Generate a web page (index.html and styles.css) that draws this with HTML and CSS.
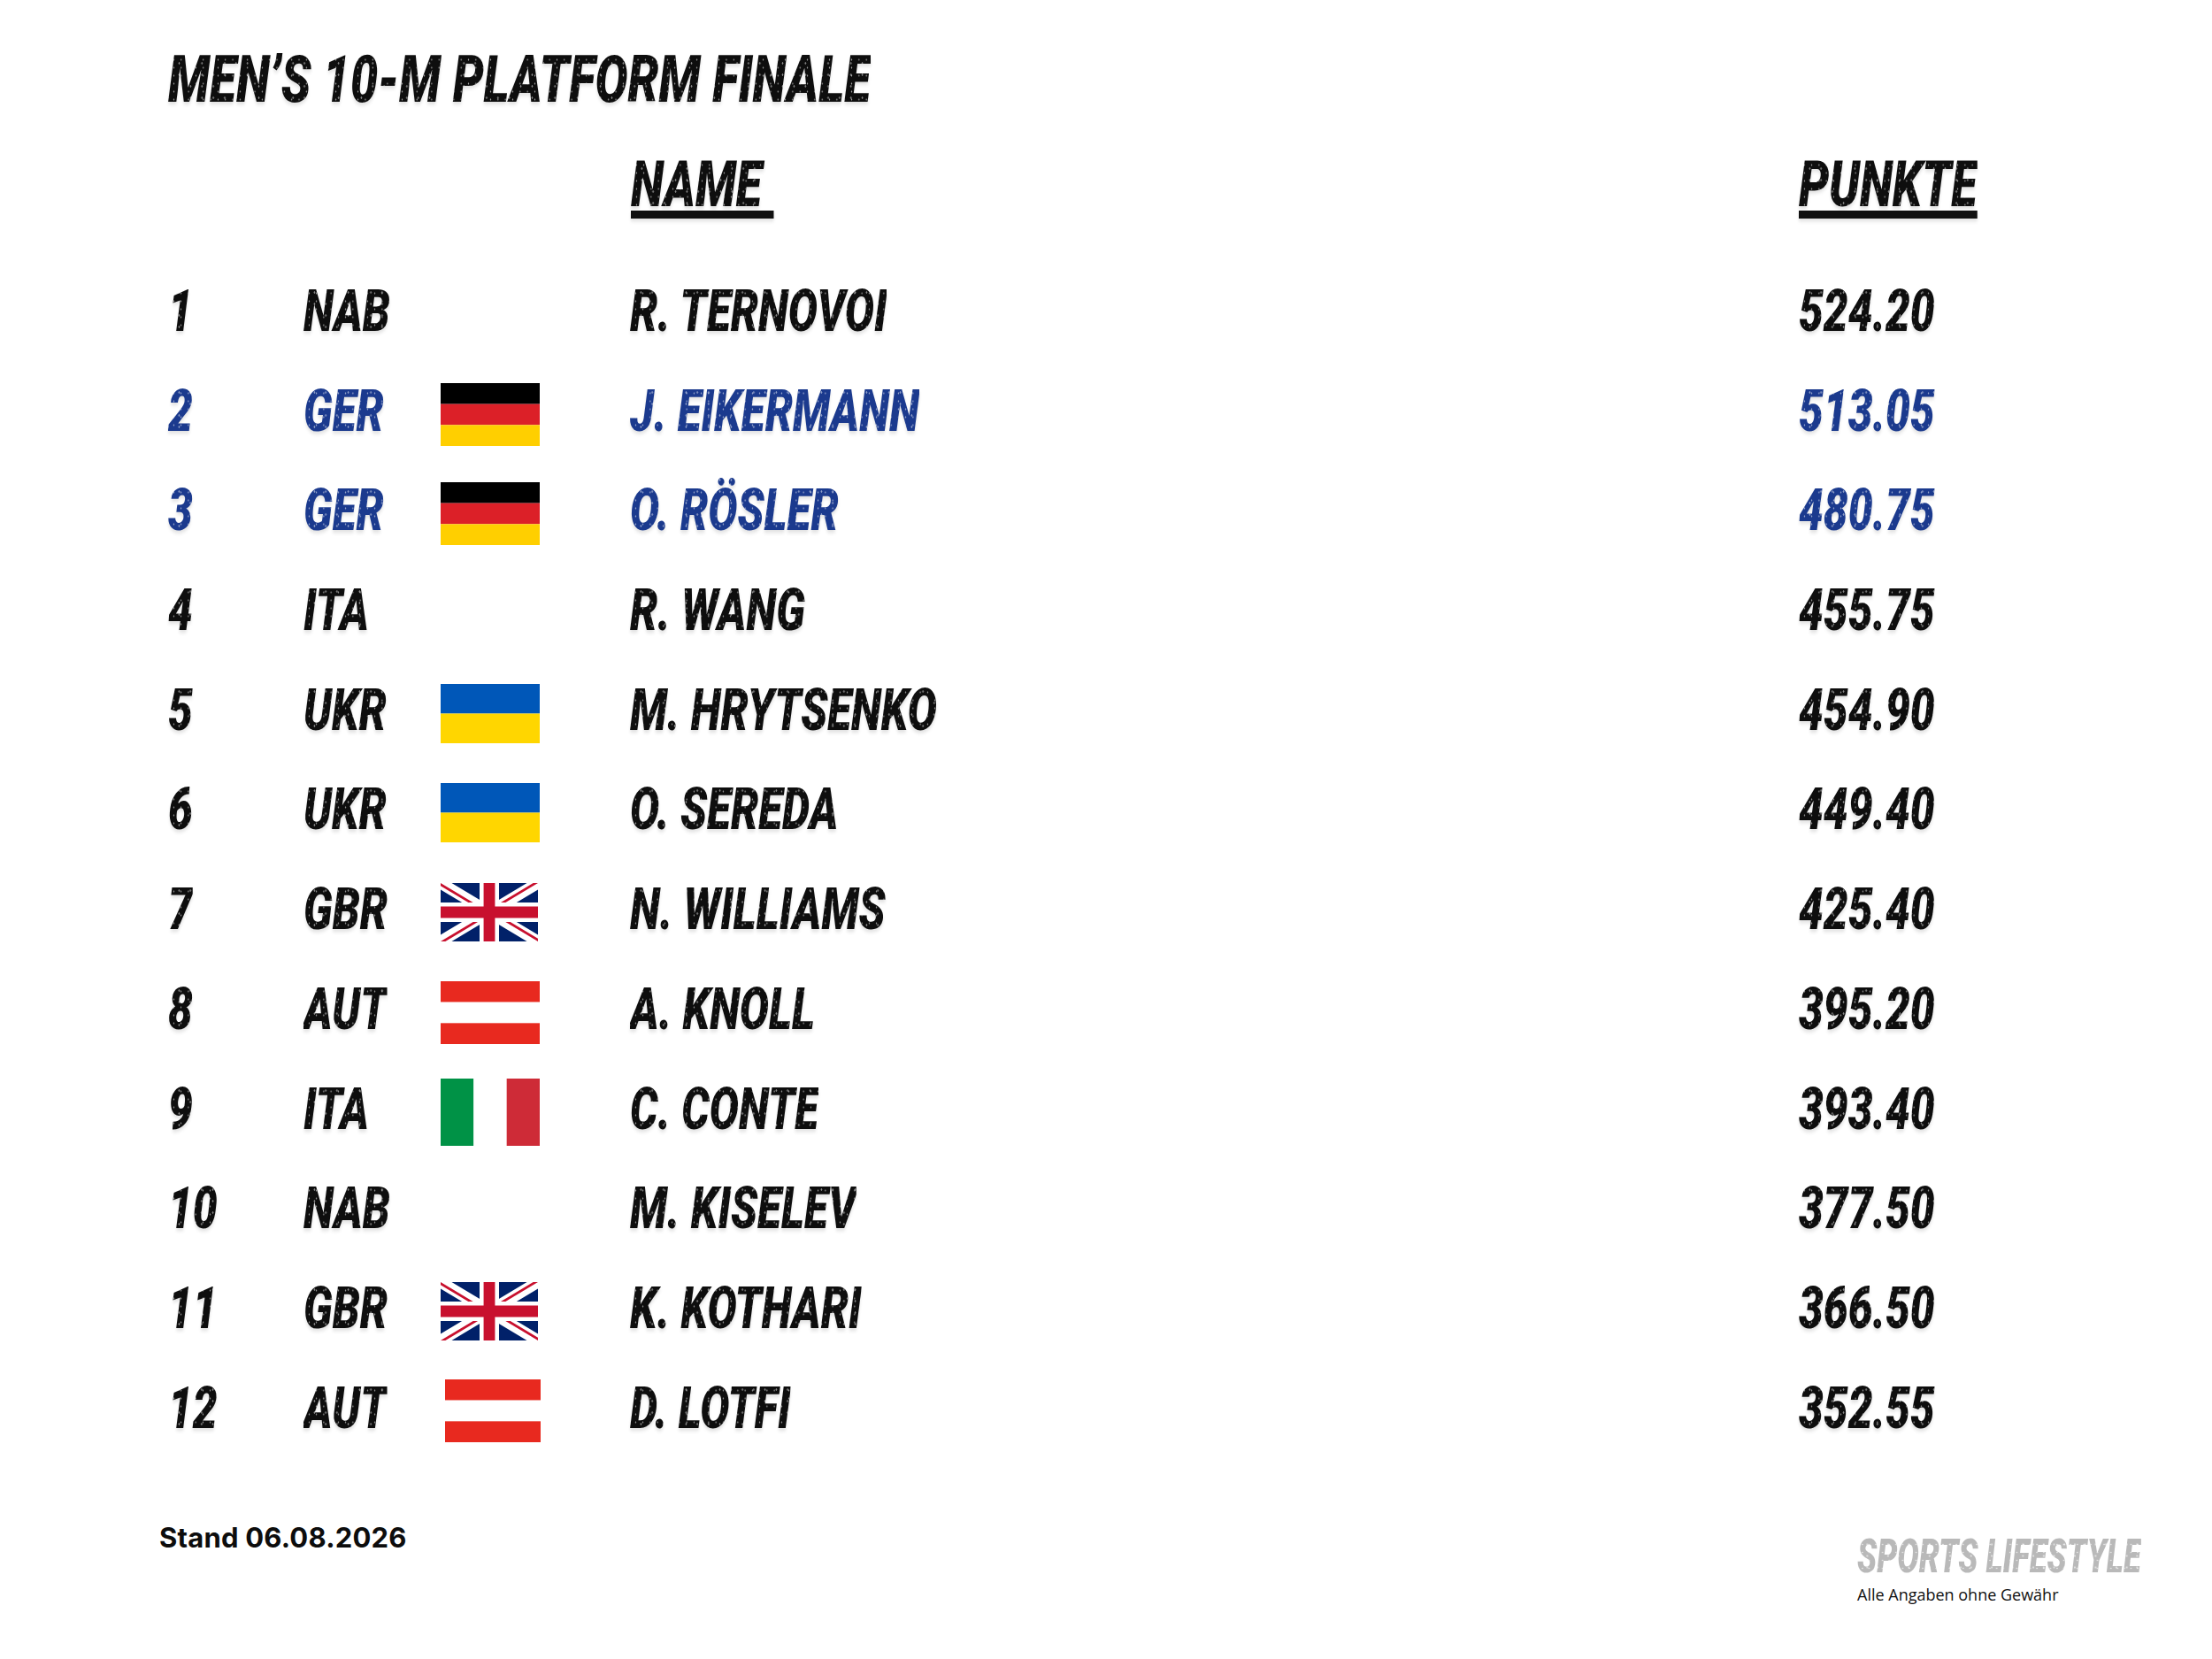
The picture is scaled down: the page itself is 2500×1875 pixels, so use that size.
FILE: index.html
```html
<!DOCTYPE html>
<html lang="de">
<head>
<meta charset="utf-8">
<title>Men's 10-m Platform Finale</title>
<link rel="stylesheet" href="styles.css">
</head>
<body>
<div class="page">
  <h1 class="title"><span class="cond ink">MEN’S 10-M PLATFORM FINALE</span></h1>

  <div class="head">
    <div class="h-name"><span class="cond ink u">NAME&nbsp;</span></div>
    <div class="h-pts"><span class="cond ink u">PUNKTE</span></div>
  </div>

  <div class="rows">
    <div class="row">
      <div class="rank"><span class="cond ink">1</span></div>
      <div class="code"><span class="cond ink">NAB</span></div>
      <div class="flagcell"></div>
      <div class="name"><span class="cond ink">R. TERNOVOI</span></div>
      <div class="pts"><span class="cond ink">524.20</span></div>
    </div>
    <div class="row hl">
      <div class="rank"><span class="cond ink">2</span></div>
      <div class="code"><span class="cond ink">GER</span></div>
      <div class="flagcell"><svg class="flag" viewBox="0 0 5 3" preserveAspectRatio="none"><rect width="5" height="1" fill="#000"/><rect y="1" width="5" height="1" fill="#dc2028"/><rect y="2" width="5" height="1" fill="#ffcf00"/></svg></div>
      <div class="name"><span class="cond ink">J. EIKERMANN</span></div>
      <div class="pts"><span class="cond ink">513.05</span></div>
    </div>
    <div class="row hl">
      <div class="rank"><span class="cond ink">3</span></div>
      <div class="code"><span class="cond ink">GER</span></div>
      <div class="flagcell"><svg class="flag" viewBox="0 0 5 3" preserveAspectRatio="none"><rect width="5" height="1" fill="#000"/><rect y="1" width="5" height="1" fill="#dc2028"/><rect y="2" width="5" height="1" fill="#ffcf00"/></svg></div>
      <div class="name"><span class="cond ink">O. RÖSLER</span></div>
      <div class="pts"><span class="cond ink">480.75</span></div>
    </div>
    <div class="row">
      <div class="rank"><span class="cond ink">4</span></div>
      <div class="code"><span class="cond ink">ITA</span></div>
      <div class="flagcell"></div>
      <div class="name"><span class="cond ink">R. WANG</span></div>
      <div class="pts"><span class="cond ink">455.75</span></div>
    </div>
    <div class="row">
      <div class="rank"><span class="cond ink">5</span></div>
      <div class="code"><span class="cond ink">UKR</span></div>
      <div class="flagcell"><svg class="flag flag-ukr" viewBox="0 0 3 2" preserveAspectRatio="none"><rect width="3" height="1" fill="#0057b8"/><rect y="1" width="3" height="1" fill="#ffd600"/></svg></div>
      <div class="name"><span class="cond ink">M. HRYTSENKO</span></div>
      <div class="pts"><span class="cond ink">454.90</span></div>
    </div>
    <div class="row">
      <div class="rank"><span class="cond ink">6</span></div>
      <div class="code"><span class="cond ink">UKR</span></div>
      <div class="flagcell"><svg class="flag flag-ukr" viewBox="0 0 3 2" preserveAspectRatio="none"><rect width="3" height="1" fill="#0057b8"/><rect y="1" width="3" height="1" fill="#ffd600"/></svg></div>
      <div class="name"><span class="cond ink">O. SEREDA</span></div>
      <div class="pts"><span class="cond ink">449.40</span></div>
    </div>
    <div class="row">
      <div class="rank"><span class="cond ink">7</span></div>
      <div class="code"><span class="cond ink">GBR</span></div>
      <div class="flagcell"><svg class="flag flag-gb" viewBox="0 0 60 36" preserveAspectRatio="none"><clipPath id="gb1t"><path d="M30,18 h30 v18 z v18 h-30 z h-30 v-18 z v-18 h30 z"/></clipPath><rect width="60" height="36" fill="#012169"/><path d="M0,0 L60,36 M60,0 L0,36" stroke="#fff" stroke-width="7"/><path d="M0,0 L60,36 M60,0 L0,36" clip-path="url(#gb1t)" stroke="#c8102e" stroke-width="3"/><path d="M30,0 v36 M0,18 h60" stroke="#fff" stroke-width="12"/><path d="M30,0 v36 M0,18 h60" stroke="#c8102e" stroke-width="7"/></svg></div>
      <div class="name"><span class="cond ink">N. WILLIAMS</span></div>
      <div class="pts"><span class="cond ink">425.40</span></div>
    </div>
    <div class="row">
      <div class="rank"><span class="cond ink">8</span></div>
      <div class="code"><span class="cond ink">AUT</span></div>
      <div class="flagcell"><svg class="flag" viewBox="0 0 3 3" preserveAspectRatio="none"><rect width="3" height="1" fill="#e8291f"/><rect y="1" width="3" height="1" fill="#fff"/><rect y="2" width="3" height="1" fill="#e8291f"/></svg></div>
      <div class="name"><span class="cond ink">A. KNOLL</span></div>
      <div class="pts"><span class="cond ink">395.20</span></div>
    </div>
    <div class="row">
      <div class="rank"><span class="cond ink">9</span></div>
      <div class="code"><span class="cond ink">ITA</span></div>
      <div class="flagcell"><svg class="flag flag-ita" viewBox="0 0 3 2" preserveAspectRatio="none"><rect width="1" height="2" fill="#009246"/><rect x="1" width="1" height="2" fill="#fff"/><rect x="2" width="1" height="2" fill="#ce2b37"/></svg></div>
      <div class="name"><span class="cond ink">C. CONTE</span></div>
      <div class="pts"><span class="cond ink">393.40</span></div>
    </div>
    <div class="row">
      <div class="rank"><span class="cond ink">10</span></div>
      <div class="code"><span class="cond ink">NAB</span></div>
      <div class="flagcell"></div>
      <div class="name"><span class="cond ink">M. KISELEV</span></div>
      <div class="pts"><span class="cond ink">377.50</span></div>
    </div>
    <div class="row">
      <div class="rank"><span class="cond ink">11</span></div>
      <div class="code"><span class="cond ink">GBR</span></div>
      <div class="flagcell"><svg class="flag flag-gb" viewBox="0 0 60 36" preserveAspectRatio="none"><clipPath id="gb2t"><path d="M30,18 h30 v18 z v18 h-30 z h-30 v-18 z v-18 h30 z"/></clipPath><rect width="60" height="36" fill="#012169"/><path d="M0,0 L60,36 M60,0 L0,36" stroke="#fff" stroke-width="7"/><path d="M0,0 L60,36 M60,0 L0,36" clip-path="url(#gb2t)" stroke="#c8102e" stroke-width="3"/><path d="M30,0 v36 M0,18 h60" stroke="#fff" stroke-width="12"/><path d="M30,0 v36 M0,18 h60" stroke="#c8102e" stroke-width="7"/></svg></div>
      <div class="name"><span class="cond ink">K. KOTHARI</span></div>
      <div class="pts"><span class="cond ink">366.50</span></div>
    </div>
    <div class="row">
      <div class="rank"><span class="cond ink">12</span></div>
      <div class="code"><span class="cond ink">AUT</span></div>
      <div class="flagcell"><svg class="flag flag-aut2" viewBox="0 0 3 3" preserveAspectRatio="none"><rect width="3" height="1" fill="#e8291f"/><rect y="1" width="3" height="1" fill="#fff"/><rect y="2" width="3" height="1" fill="#e8291f"/></svg></div>
      <div class="name"><span class="cond ink">D. LOTFI</span></div>
      <div class="pts"><span class="cond ink">352.55</span></div>
    </div>
  </div>

  <footer class="foot">
    <div class="stand">Stand 06.08.2026</div>
    <div class="brand">
      <div class="logo"><span class="cond-logo ink">SPORTS LIFESTYLE</span></div>
      <div class="disclaimer">Alle Angaben ohne Gewähr</div>
    </div>
  </footer>
</div>
</body>
</html>
```

FILE: styles.css
```css
html, body {
  margin: 0;
  padding: 0;
  background: #fff;
}

.page {
  width: 2500px;
  height: 1875px;
  box-sizing: border-box;
  padding: 50px 0 0 190px;
  overflow: hidden;
  --ink: #0e0e0e;
}

.cond {
  display: inline-block;
  transform: scaleX(0.75);
  transform-origin: 0 50%;
  white-space: nowrap;
  filter: drop-shadow(0 3px 2px rgba(0, 0, 0, 0.12));
}

.ink {
  background-color: var(--ink);
  background-image:
    radial-gradient(circle, rgba(255,255,255,0.6) 0 0.7px, transparent 1.3px),
    radial-gradient(circle, rgba(255,255,255,0.55) 0 0.9px, transparent 1.5px);
  background-size: 11px 9px, 17px 13px;
  background-position: 3px 4px, 8px 2px;
  -webkit-background-clip: text;
  background-clip: text;
  color: transparent;
}

.title {
  margin: 0;
  font: italic 900 73px/80px Roboto, "Liberation Sans", sans-serif;
  height: 80px;
}

.title .cond {
  transform: scaleX(0.757);
}

.head {
  margin-top: 39px;
  display: grid;
  grid-template-columns: 523px 1320px 1fr;
  font: italic 900 72px/80px Roboto, "Liberation Sans", sans-serif;
  height: 80px;
}

.h-name { grid-column: 2; }
.h-pts { grid-column: 3; }

.u {
  text-decoration: underline;
  text-decoration-color: #111;
  text-decoration-thickness: 9px;
  text-underline-offset: 5px;
  text-decoration-skip-ink: none;
}

.rows {
  margin-top: 47px;
  display: grid;
  grid-auto-rows: 112.7px;
}

.row {
  display: grid;
  grid-template-columns: 153px 155px 214px 1321px 1fr;
  align-items: center;
  font: italic 900 66px/112.7px Roboto, "Liberation Sans", sans-serif;
}

.row > div {
  height: 112.7px;
}

.row.hl {
  --ink: #1b3a8e;
}

.flagcell {
  display: flex;
  align-items: center;
  padding-top: 6px;
  box-sizing: border-box;
}

.flag {
  display: block;
  width: 112px;
  height: 71px;
}

.flag-ukr { height: 67px; }
.flag-gb { width: 110px; height: 66px; }
.flag-ita { height: 76px; }
.flag-aut2 { margin-left: 5px; width: 108px; }

.foot {
  margin-top: 70px;
  display: grid;
  grid-template-columns: 1909px 1fr;
  align-items: start;
}

.stand {
  margin-left: -10px;
  font: 700 31px/40px Inter, "Open Sans", sans-serif;
  color: #0d0d0d;
  letter-spacing: 0.2px;
}

.brand {
  margin-top: 19px;
}

.logo {
  font: italic 900 53px/44px Roboto, "Liberation Sans", sans-serif;
  height: 44px;
  --ink: #b9b9b9;
}

.cond-logo {
  display: inline-block;
  transform: scaleX(0.69);
  transform-origin: 0 50%;
  white-space: nowrap;
}

.disclaimer {
  margin-top: 9px;
  font: 400 18px/24px "Open Sans", "Noto Sans", sans-serif;
  color: #111;
}
```
